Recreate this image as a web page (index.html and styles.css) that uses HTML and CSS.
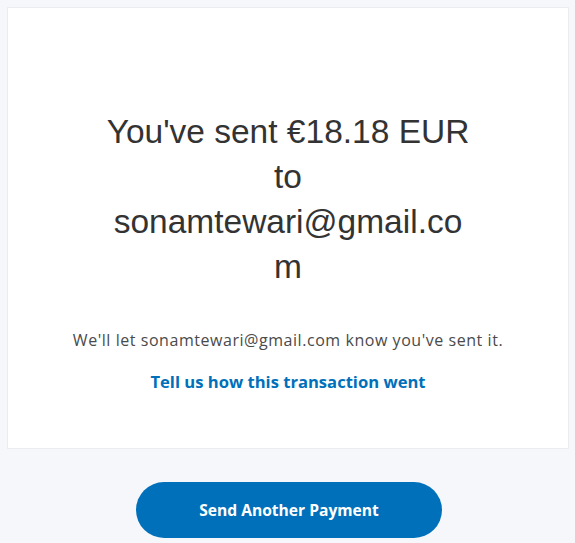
FILE: index.html
```html
<!DOCTYPE html>
<html lang="en">
<head>
<meta charset="utf-8">
<title>Payment sent</title>
<link rel="stylesheet" href="styles.css">
</head>
<body>
<main class="page">
  <section class="card">
    <h1 class="title">You've sent €18.18 EUR to sonamtewari@gmail.com</h1>
    <p class="note">We'll let sonamtewari@gmail.com know you've sent it.</p>
    <a class="feedback" href="#">Tell us how this transaction went</a>
  </section>
  <div class="actions">
    <button class="btn-primary" type="button">Send Another Payment</button>
  </div>
</main>
</body>
</html>
```

FILE: styles.css
```css
html, body {
  margin: 0;
  padding: 0;
  background: #f5f7fa;
}

.page {
  padding: 7px 6px 0 7px;
  display: flex;
  flex-direction: column;
}

.card {
  background: #ffffff;
  border: 1px solid #eaeced;
  height: 442px;
  box-sizing: border-box;
  padding-top: 101px;
  display: flex;
  flex-direction: column;
  align-items: center;
  text-align: center;
}

.title {
  margin: 0;
  width: 370px;
  font-family: "Liberation Sans", Arial, sans-serif;
  font-weight: 400;
  font-size: 33.5px;
  line-height: 45px;
  color: #333333;
  overflow-wrap: break-word;
}

.note {
  margin: 40px 0 0;
  font-family: "Open Sans", sans-serif;
  font-size: 16px;
  letter-spacing: 0.55px;
  line-height: 22px;
  color: #4a4a4a;
}

.feedback {
  margin-top: 19px;
  font-family: "Open Sans", sans-serif;
  font-weight: 700;
  font-size: 16.6px;
  line-height: 24px;
  color: #0070ba;
  text-decoration: none;
}

.actions {
  display: flex;
  justify-content: center;
  padding: 33px 0 0 2px;
}

.btn-primary {
  width: 306px;
  height: 56px;
  border: none;
  border-radius: 28px;
  background: #0070ba;
  color: #ffffff;
  font-family: "Open Sans", sans-serif;
  font-weight: 700;
  font-size: 15.6px;
  cursor: pointer;
}
```
